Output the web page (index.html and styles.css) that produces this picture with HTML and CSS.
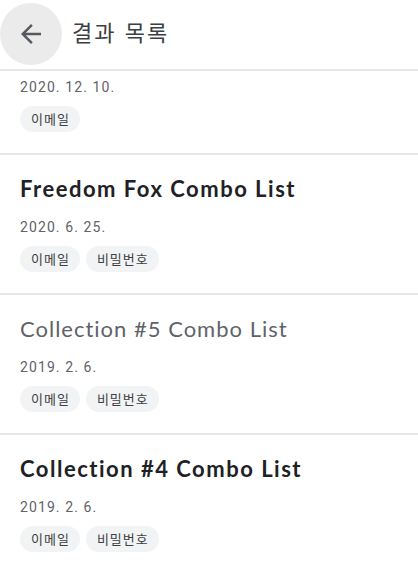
FILE: index.html
```html
<!DOCTYPE html>
<html lang="ko">
<head>
  <meta charset="UTF-8">
  <meta name="viewport" content="width=device-width, initial-scale=1.0">
  <title>결과 목록</title>
  <link rel="stylesheet" href="styles.css">
</head>
<body>
  <div class="top-bar">
    <a href="#" class="back-button">
      <svg viewBox="0 0 24 24" xmlns="http://www.w3.org/2000/svg">
        <path d="M20 11H7.83l5.59-5.59L12 4l-8 8 8 8 1.41-1.41L7.83 13H20v-2z" />
      </svg>
    </a>
    <div class="header">결과 목록</div>
  </div>

  <div class="results">
    <!-- pozycja przewinięta pod pasek - widać tylko datę i chipy -->
    <div class="result scrolled">
      <div class="result-date">2020. 12. 10.</div>
      <div class="chips">
        <span class="chip">이메일</span>
      </div>
    </div>

    <div class="result">
      <div class="result-title">Freedom Fox Combo List</div>
      <div class="result-date">2020. 6. 25.</div>
      <div class="chips">
        <span class="chip">이메일</span>
        <span class="chip">비밀번호</span>
      </div>
    </div>

    <div class="result visited">
      <div class="result-title">Collection #5 Combo List</div>
      <div class="result-date">2019. 2. 6.</div>
      <div class="chips">
        <span class="chip">이메일</span>
        <span class="chip">비밀번호</span>
      </div>
    </div>

    <div class="result">
      <div class="result-title">Collection #4 Combo List</div>
      <div class="result-date">2019. 2. 6.</div>
      <div class="chips">
        <span class="chip">이메일</span>
        <span class="chip">비밀번호</span>
      </div>
    </div>
  </div>
</body>
</html>
```

FILE: styles.css
```css
* {
  margin: 0;
  padding: 0;
  box-sizing: border-box;
}

html, body {
  font-family: Roboto, "Noto Sans CJK KR", sans-serif;
  background-color: #ffffff;
  height: 100%;
  overflow: hidden;
}

/* Top bar */
.top-bar {
  height: 71px;
  display: flex;
  align-items: center;
  border-bottom: 2px solid #e6e6e6;
  background-color: #ffffff;
}

.back-button {
  width: 62px;
  height: 62px;
  margin-bottom: 2px;
  border-radius: 50%;
  background-color: #ebebeb;
  display: flex;
  align-items: center;
  justify-content: center;
}

.back-button svg {
  width: 30px;
  height: 30px;
  fill: #55595e;
}

.header {
  margin-left: 10px;
  margin-bottom: 8px;
  font-family: "Noto Sans CJK KR", sans-serif;
  font-size: 22px;
  line-height: 30px;
  letter-spacing: 2px;
  color: #3c4043;
}

/* Lista wyników */
.result {
  padding: 20px 20px 21px;
  border-bottom: 2px solid #e6e6e6;
}

.result.scrolled {
  padding-top: 6px;
}

.result-title {
  margin-bottom: 14px;
  font-family: Lato, sans-serif;
  font-weight: 700;
  font-size: 22px;
  line-height: 28px;
  letter-spacing: 1.5px;
  font-variant-ligatures: none;
  color: #202124;
}

.visited .result-title {
  font-weight: 400;
  letter-spacing: 1px;
  color: #5f6368;
}

.result-date {
  font-size: 14px;
  line-height: 20px;
  letter-spacing: 1.1px;
  color: #5f6368;
}

.chips {
  margin-top: 9px;
  display: flex;
  gap: 6px;
}

.chip {
  height: 26px;
  padding: 0 10px 0 11px;
  border-radius: 13px;
  background-color: #f1f3f4;
  font-family: "Noto Sans CJK KR", sans-serif;
  font-size: 13px;
  line-height: 26px;
  letter-spacing: 1px;
  color: #3c4043;
}
```
